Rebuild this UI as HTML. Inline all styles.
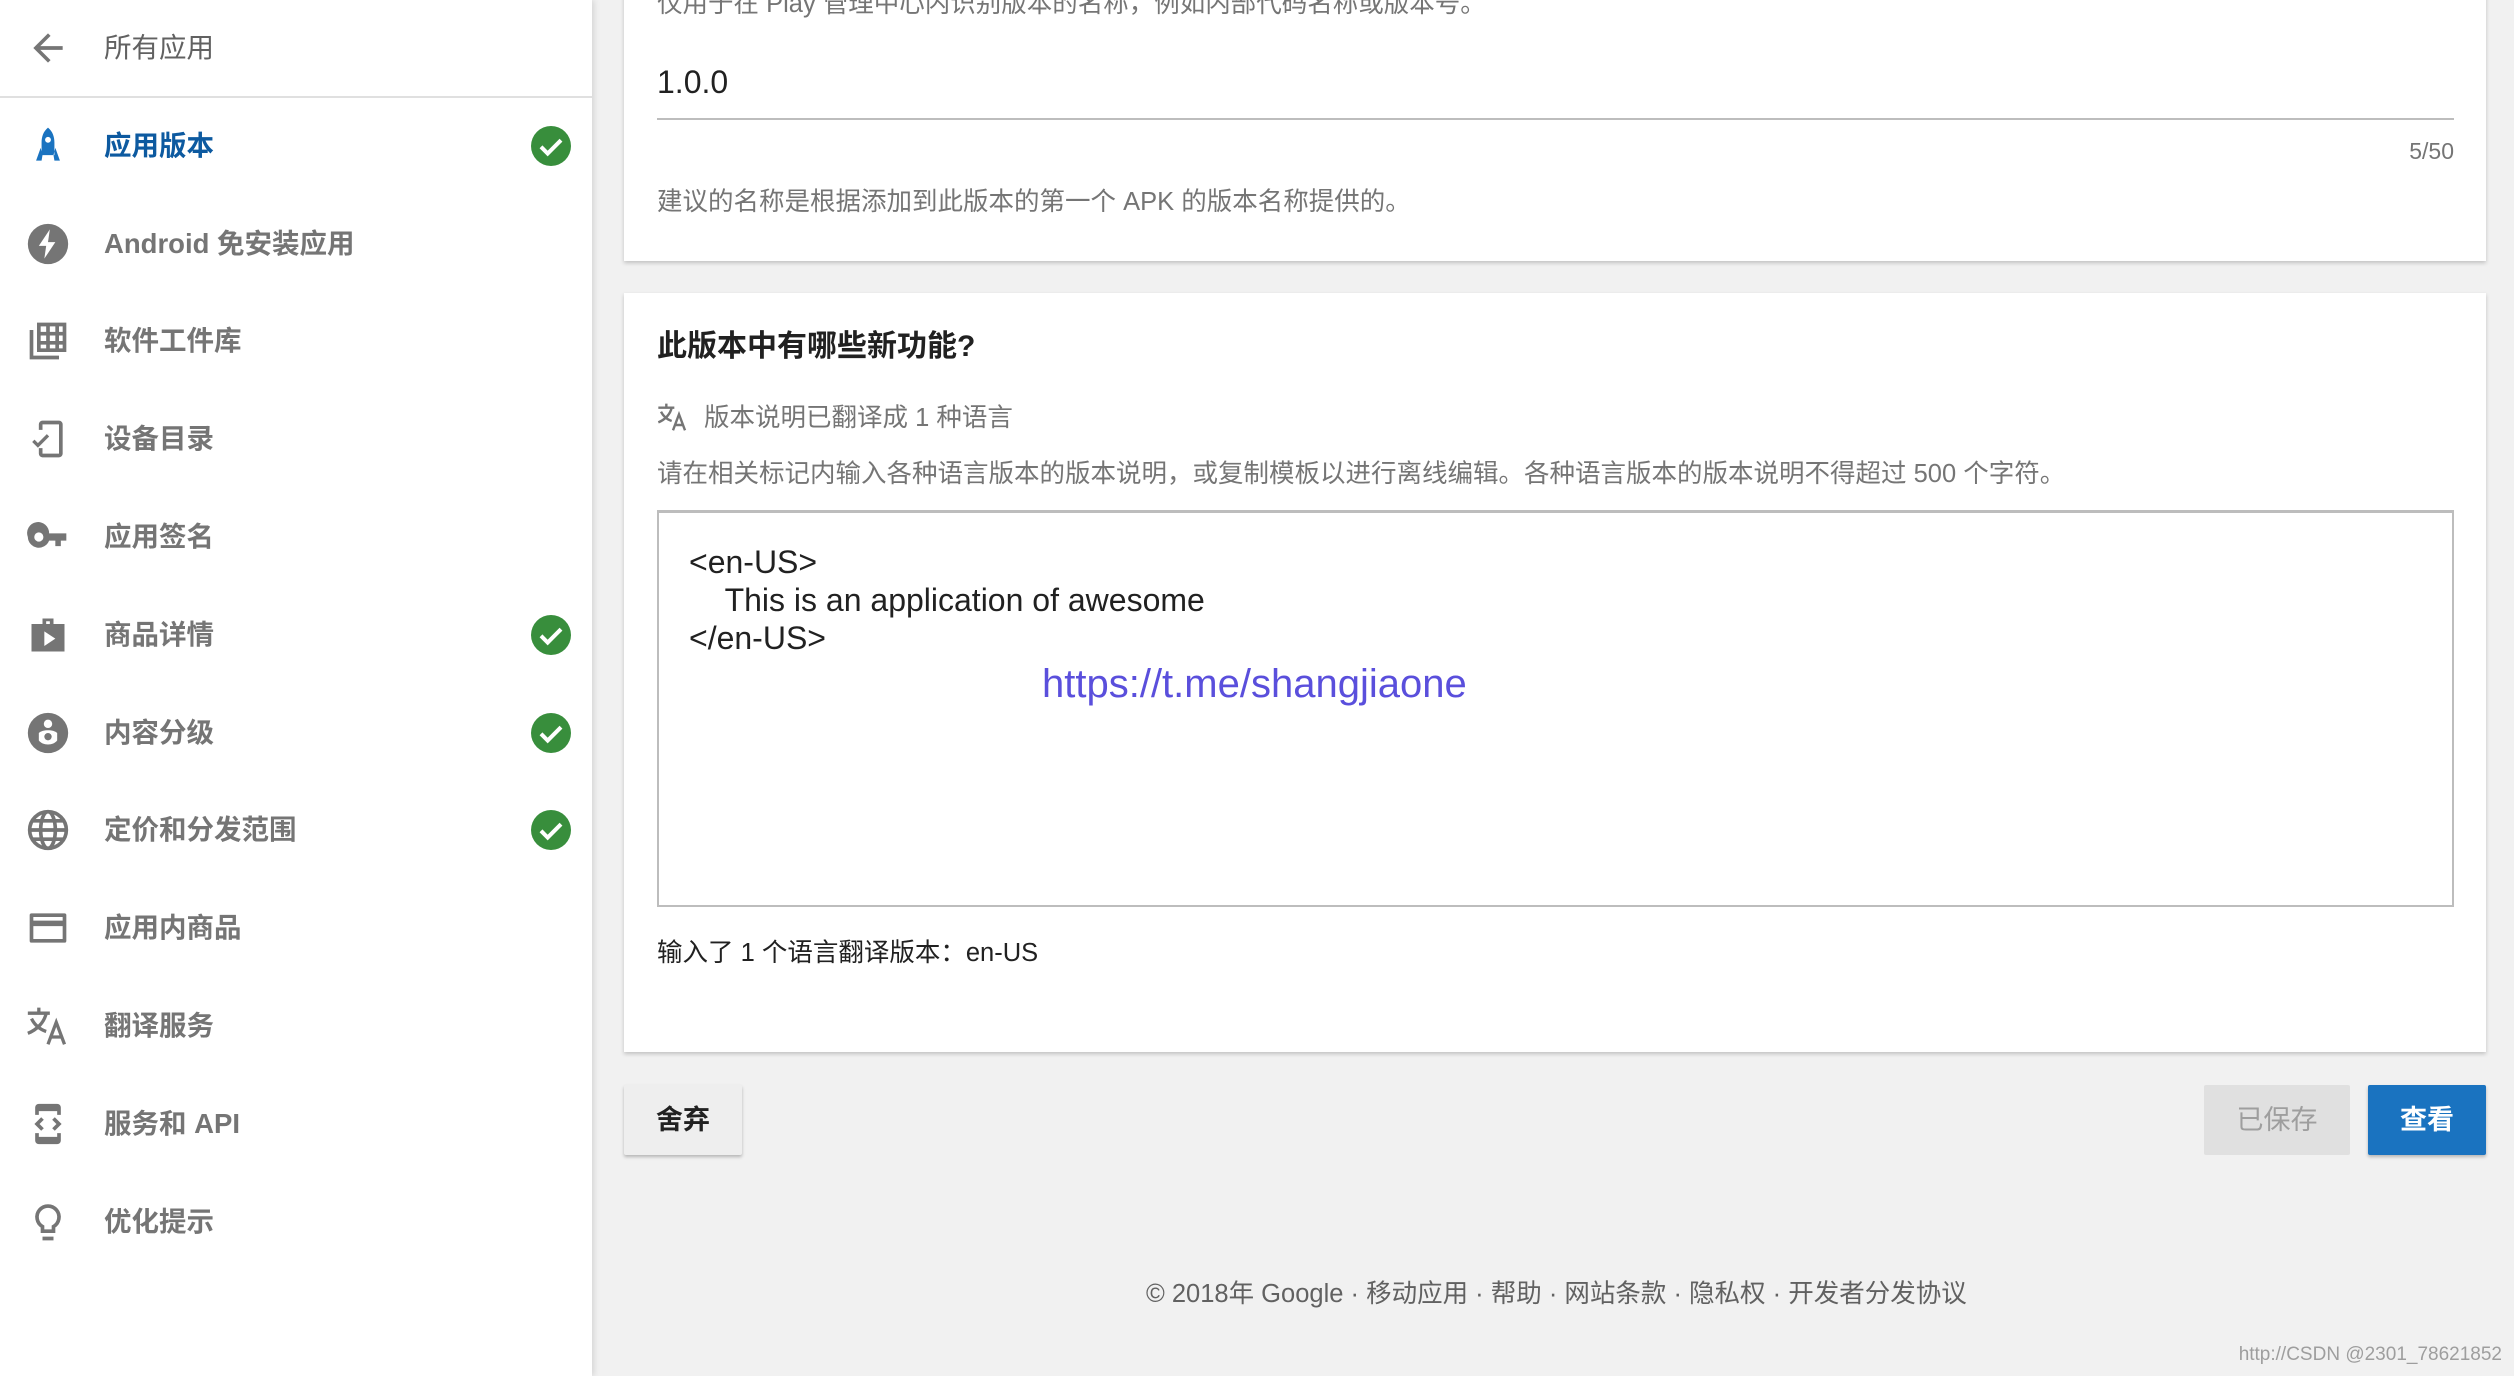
<!DOCTYPE html>
<html><head><meta charset="utf-8"><style>
*{margin:0;padding:0;box-sizing:border-box}
body{width:2514px;height:1376px;overflow:hidden;background:#f1f1f1;font-family:"Liberation Sans","Noto Sans CJK SC",sans-serif;position:relative}
.sb{position:absolute;left:0;top:0;width:592px;height:1376px;background:#fff;box-shadow:2px 0 6px rgba(0,0,0,.12)}
.it{position:absolute;left:0;width:592px;height:60px;display:flex;align-items:center}
.it .ic{position:absolute;left:26px;top:8px;width:44px;height:44px}
.it .tx{position:absolute;left:104px;font-size:27.5px;font-weight:bold;color:#757575;line-height:60px;top:0;white-space:nowrap}
.ck{position:absolute;left:531px;top:10px;width:40px;height:40px}
.card{position:absolute;left:624px;width:1862px;background:#fff;box-shadow:0 2px 4px rgba(0,0,0,.2)}
.t{position:absolute;white-space:nowrap}
</style></head><body>
<div class="sb">
 <div class="it" style="top:18px"><svg class="ic" viewBox="0 0 24 24"><path d="M20 11H7.8l5.6-5.6L12 4l-8 8 8 8 1.4-1.4L7.8 13H20z" fill="#757575"/></svg><div class="tx" style="font-weight:normal;color:#616161">所有应用</div></div>
 <div style="position:absolute;left:0;top:96px;width:592px;height:2px;background:#e0e0e0"></div>
 <div class="it" style="top:116px"><svg class="ic" viewBox="0 0 24 24"><path d="M12 2c-2.5 2-3.5 5-3.5 8v7h7v-7c0-3-1-6-3.5-8zm0 5a1.6 1.6 0 110 3.2A1.6 1.6 0 0112 7zM8 13l-2.5 7h3L9 17zM16 13l2.5 7h-3L15 17z" fill="#1a73c0"/></svg><div class="tx" style="color:#0d5aa0">应用版本</div><svg class="ck" viewBox="0 0 24 24"><circle cx="12" cy="12" r="12" fill="#388e3c"/><path d="M6 12.5l4 4 8-8" stroke="#fff" stroke-width="2.4" fill="none"/></svg></div>
 <div class="it" style="top:214px"><svg class="ic" viewBox="0 0 24 24"><circle cx="12" cy="12" r="11" fill="#757575"/><path d="M13 4l-6 9h4l-1 7 6-9h-4z" fill="#fff"/></svg><div class="tx">Android 免安装应用</div></div>
 <div class="it" style="top:311px"><svg class="ic" viewBox="0 0 24 24"><path d="M2 6v16h16v-2H4V6zM6 2v16h16V2zm2 2h3v3H8zm5 0h3v3h-3zm5 0h2v3h-2zM8 9h3v3H8zm5 0h3v3h-3zm5 0h2v3h-2zM8 14h3v2H8zm5 0h3v2h-3zm5 0h2v2h-2z" fill="#757575"/></svg><div class="tx">软件工件库</div></div>
 <div class="it" style="top:409px"><svg class="ic" viewBox="0 0 24 24"><path d="M9 2h9a2 2 0 012 2v16a2 2 0 01-2 2H9a2 2 0 01-2-2v-3h2v3h9V4H9v3H7V4a2 2 0 012-2z" fill="#757575"/><path d="M4 13l2.5 2.5L12 10" stroke="#757575" stroke-width="1.8" fill="none"/></svg><div class="tx">设备目录</div></div>
 <div class="it" style="top:507px"><svg class="ic" viewBox="0 0 24 24"><path d="M12.6 10A6 6 0 101 12a6 6 0 0011.6 2H16v3h3v-3h3v-4zM7 14.5a2.5 2.5 0 110-5 2.5 2.5 0 010 5z" fill="#757575"/></svg><div class="tx">应用签名</div></div>
 <div class="it" style="top:605px"><svg class="ic" viewBox="0 0 24 24"><path d="M9 3h6v3h6v15H3V6h6zm2 1.5V6h2V4.5zM10 10v8l6-4z" fill="#757575"/></svg><div class="tx">商品详情</div><svg class="ck" viewBox="0 0 24 24"><circle cx="12" cy="12" r="12" fill="#388e3c"/><path d="M6 12.5l4 4 8-8" stroke="#fff" stroke-width="2.4" fill="none"/></svg></div>
 <div class="it" style="top:703px"><svg class="ic" viewBox="0 0 24 24"><circle cx="12" cy="12" r="11" fill="#757575"/><circle cx="12" cy="7" r="2.3" fill="#fff"/><path d="M7 12c2-2 8-2 10 0v4c-2 3-8 3-10 0z" fill="#fff"/><circle cx="12" cy="14" r="2" fill="#757575"/></svg><div class="tx">内容分级</div><svg class="ck" viewBox="0 0 24 24"><circle cx="12" cy="12" r="12" fill="#388e3c"/><path d="M6 12.5l4 4 8-8" stroke="#fff" stroke-width="2.4" fill="none"/></svg></div>
 <div class="it" style="top:800px"><svg class="ic" viewBox="0 0 24 24" fill="none" stroke="#757575" stroke-width="2"><circle cx="12" cy="12" r="10"/><ellipse cx="12" cy="12" rx="4" ry="10"/><path d="M2 12h20M3.5 7h17M3.5 17h17"/></svg><div class="tx">定价和分发范围</div><svg class="ck" viewBox="0 0 24 24"><circle cx="12" cy="12" r="12" fill="#388e3c"/><path d="M6 12.5l4 4 8-8" stroke="#fff" stroke-width="2.4" fill="none"/></svg></div>
 <div class="it" style="top:898px"><svg class="ic" viewBox="0 0 24 24"><path d="M3 4h18a1 1 0 011 1v14a1 1 0 01-1 1H3a1 1 0 01-1-1V5a1 1 0 011-1zm1 2v2h16V6zm0 5v7h16v-7z" fill="#757575"/></svg><div class="tx">应用内商品</div></div>
 <div class="it" style="top:996px"><svg class="ic" viewBox="0 0 24 24" fill="none" stroke="#757575" stroke-width="1.8"><path d="M1 5h12M7 2v3M11 5c-1 5-5 9-10 11M3 8c2 4 5 6 8 7M12 22l4.5-12L21 22M13.5 18h6"/></svg><div class="tx">翻译服务</div></div>
 <div class="it" style="top:1094px"><svg class="ic" viewBox="0 0 24 24"><path d="M7 1h10a2 2 0 012 2v4h-2V5H7v2H5V3a2 2 0 012-2zM5 17h2v2h10v-2h2v4a2 2 0 01-2 2H7a2 2 0 01-2-2z" fill="#757575"/><path d="M9 9l-3 3 3 3M15 9l3 3-3 3" stroke="#757575" stroke-width="2" fill="none"/></svg><div class="tx">服务和 API</div></div>
 <div class="it" style="top:1192px"><svg class="ic" viewBox="0 0 24 24" fill="none" stroke="#757575" stroke-width="2"><path d="M9 21h6M9 17h6v-2.5a6 6 0 10-6 0z"/></svg><div class="tx">优化提示</div></div>
</div>

<div class="card" style="top:-10px;height:271px">
 <div class="t" style="left:33px;top:-7px;font-size:25.5px;color:#757575">仅用于在 Play 管理中心内识别版本的名称，例如内部代码名称或版本号。</div>
 <div class="t" style="left:33px;top:74px;font-size:32px;color:#212121">1.0.0</div>
 <div style="position:absolute;left:33px;top:128px;width:1797px;height:2px;background:#bdbdbd"></div>
 <div class="t" style="right:32px;top:148px;font-size:23px;color:#757575">5/50</div>
 <div class="t" style="left:33px;top:191px;font-size:25.5px;color:#757575">建议的名称是根据添加到此版本的第一个 APK 的版本名称提供的。</div>
</div>

<div class="card" style="top:293px;height:759px">
 <div class="t" style="left:33px;top:28px;font-size:30px;font-weight:bold;color:#212121">此版本中有哪些新功能?</div>
 <svg style="position:absolute;left:33px;top:108px;width:32px;height:32px" viewBox="0 0 24 24" fill="none" stroke="#757575" stroke-width="1.8"><path d="M1 5h12M7 2v3M11 5c-1 5-5 9-10 11M3 8c2 4 5 6 8 7M12 22l4.5-12L21 22M13.5 18h6"/></svg>
 <div class="t" style="left:80px;top:104px;font-size:25.5px;color:#757575">版本说明已翻译成 1 种语言</div>
 <div class="t" style="left:33px;top:160px;font-size:25.5px;color:#757575">请在相关标记内输入各种语言版本的版本说明，或复制模板以进行离线编辑。各种语言版本的版本说明不得超过 500 个字符。</div>
 <div style="position:absolute;left:33px;top:217px;width:1797px;height:397px;border:2px solid #bdbdbd;border-top-width:3px"></div>
 <div class="t" style="left:65px;top:250px;font-size:32px;color:#212121;line-height:38px">&lt;en-US&gt;<br>&nbsp;&nbsp;&nbsp;&nbsp;This is an application of awesome<br>&lt;/en-US&gt;</div>
 <div class="t" style="left:418px;top:369px;font-size:40px;color:#5a4fdc">https://t.me/shangjiaone</div>
 <div class="t" style="left:33px;top:639px;font-size:25.5px;color:#212121">输入了 1 个语言翻译版本：en-US</div>
</div>

<div style="position:absolute;left:624px;top:1085px;width:118px;height:70px;background:#eee;box-shadow:0 2px 3px rgba(0,0,0,.25);border-radius:2px;font-size:27px;font-weight:bold;color:#212121;text-align:center;line-height:70px">舍弃</div>
<div style="position:absolute;left:2204px;top:1085px;width:146px;height:70px;background:#e0e0e0;border-radius:2px;font-size:27px;color:#9e9e9e;text-align:center;line-height:70px">已保存</div>
<div style="position:absolute;left:2368px;top:1085px;width:118px;height:70px;background:#1a73c0;box-shadow:0 2px 3px rgba(0,0,0,.25);border-radius:2px;font-size:27px;font-weight:bold;color:#fff;text-align:center;line-height:70px">查看</div>

<div class="t" style="left:1146px;top:1273px;font-size:25.5px;color:#616161">© 2018年 Google · 移动应用 · 帮助 · 网站条款 · 隐私权 · 开发者分发协议</div>
<div class="t" style="right:12px;top:1344px;font-size:19px;color:#9e9e9e">http://CSDN @2301_78621852</div>
</body></html>
